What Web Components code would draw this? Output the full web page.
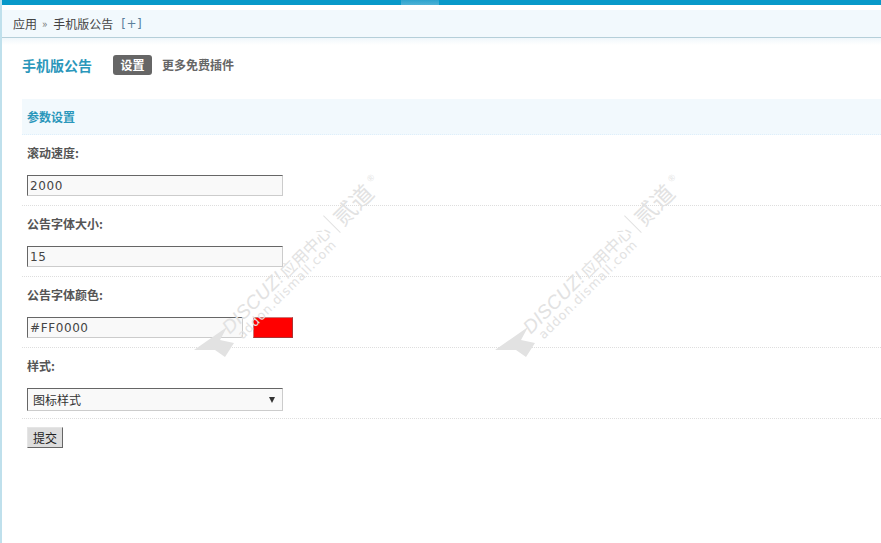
<!DOCTYPE html>
<html lang="zh">
<head>
<meta charset="utf-8">
<title>手机版公告</title>
<style>
html, body { margin: 0; height: 100%; background: #fff; overflow: hidden; }
body { font: 12px "Noto Sans CJK SC", "Liberation Sans", sans-serif; color: #444; }
</style>
</head>
<body>
<admin-shell>
   <crumb-bar slot="crumbs"></crumb-bar>
   <plugin-head></plugin-head>
   <form-panel heading="参数设置">
      <form-row label="滚动速度:"><text-field value="2000"></text-field></form-row>
      <form-row label="公告字体大小:"><text-field value="15"></text-field></form-row>
      <form-row label="公告字体颜色:"><color-field value="#FF0000"></color-field></form-row>
      <form-row label="样式:"><select-field value="图标样式"></select-field></form-row>
      <submit-button>提交</submit-button>
   </form-panel>
   <dz-watermark style="left:190px;top:170px"></dz-watermark>
   <dz-watermark style="left:491px;top:170px"></dz-watermark>
</admin-shell>

<script>
const define = ( selector, html, init ) => {
   customElements.define( selector, class extends HTMLElement {
      constructor() { super();
         const templateEl = document.createElement( 'template' );
         templateEl.innerHTML = html;
         this.attachShadow( {mode: 'open'} ).appendChild( templateEl.content.cloneNode( true ) );
      }
      connectedCallback() { init && init.call( this, this.shadowRoot ) }
   })
}
const cjk = '"Noto Sans CJK SC", "Liberation Sans", sans-serif';

define( 'admin-shell', `<style>
   :host { display: block; position: relative; height: 543px; box-sizing: border-box;
      border-left: 2px solid #bfe0ec; overflow: hidden; }
   .topbar { height: 5px; margin-left: -2px; padding-left: 401px; background: #0899c9; }
   .topbar i { display: block; width: 38px; height: 5px; background: linear-gradient( #2ea3cd, #4fb2d6 ); }
   .gap { height: 5px; }
</style>
<div class="topbar"><i></i></div>
<div class="gap"></div>
<slot name="crumbs"></slot>
<slot></slot>` );

define( 'crumb-bar', `<style>
   :host { display: flex; align-items: center; height: 27px; padding-left: 11px; box-sizing: content-box;
      background: #f2f9fd; border-bottom: 1px solid #b5cfd9; color: #444; font: 12px/27px ${cjk}; }
   .sep { margin: 0 6px 0 5px; color: #777; font-size: 11px; }
   .add { margin-left: 8px; color: #5a7f9c; letter-spacing: .5px; font: 12px "DejaVu Sans", sans-serif; }
   .fade { position: absolute; left: 0; right: 0; top: 38px; height: 7px;
      background: linear-gradient( #f0f7fb, #fff ); }
</style>
<span>应用</span><span class="sep">»</span><span>手机版公告</span><span class="add">[+]</span>
<div class="fade"></div>` );

define( 'plugin-head', `<style>
   :host { display: flex; align-items: center; height: 22px; padding: 16px 0 23px 20px; font: bold 12px/22px ${cjk}; }
   h1 { margin: 0 21px 0 0; font: bold 14px/22px ${cjk}; color: #2b97bb; }
   .on { display: block; width: 39px; height: 20px; margin-right: 10px; border-radius: 3px;
      background: #666; color: #fff; text-align: center; line-height: 20px; }
   .off { color: #666; }
</style>
<h1>手机版公告</h1><span class="on">设置</span><span class="off">更多免费插件</span>` );

define( 'form-panel', `<style>
   :host { display: block; margin-left: 20px; }
   .head { height: 36px; padding-left: 5px; box-sizing: border-box; background: #f2f9fd;
      border-bottom: 1px dotted #deeffb; color: #2b97bb; font: bold 12px/36px ${cjk}; }
</style>
<div class="head"></div>
<slot></slot>`, function( root ) { root.querySelector( '.head' ).textContent = this.getAttribute( 'heading' ) } );

define( 'form-row', `<style>
   :host { display: block; height: 71px; box-sizing: border-box; padding: 0 0 0 5px;
      border-bottom: 1px dotted #dedede; }
   .label { height: 40px; color: #555; font: bold 12px/35px ${cjk}; }
</style>
<div class="label"></div>
<slot></slot>`, function( root ) { root.querySelector( '.label' ).textContent = this.getAttribute( 'label' ) } );

const fieldCss = `
   .box { display: block; box-sizing: border-box; height: 21px; padding: 0 2px; background: #f9f9f9;
      border: 1px solid; border-color: #666 #ccc #ccc #666; color: #444;
      font: 12px/20px "DejaVu Sans", sans-serif; letter-spacing: .6px; }`;

define( 'text-field', `<style>
   :host { display: block; width: 256px; }
   ${fieldCss}
</style>
<span class="box"></span>`, function( root ) { root.querySelector( '.box' ).textContent = this.getAttribute( 'value' ) } );

define( 'color-field', `<style>
   :host { display: flex; align-items: flex-start; width: 266px; }
   ${fieldCss}
   .box { width: 216px; }
   .swatch { width: 40px; height: 21px; margin-left: 10px; box-sizing: border-box;
      background: #f00; border: 1px solid; border-color: #c77 #a33 #a33 #c77; }
</style>
<span class="box"></span><span class="swatch"></span>`, function( root ) { root.querySelector( '.box' ).textContent = this.getAttribute( 'value' ) } );

define( 'select-field', `<style>
   :host { display: flex; box-sizing: border-box; width: 256px; height: 23px; align-items: center;
      justify-content: space-between; padding: 0 7px 0 5px; background: #f9f9f9;
      border: 1px solid; border-color: #666 #ccc #ccc #666; color: #333; font: 12px/21px ${cjk}; }
   svg { display: block; }
</style>
<span class="text"></span>
<svg width="6" height="6" viewBox="0 0 6 6"><path d="M0 0H6L3 6Z" fill="#333"/></svg>`, function( root ) { root.querySelector( '.text' ).textContent = this.getAttribute( 'value' ) } );

define( 'submit-button', `<style>
   :host { display: block; width: 36px; height: 21px; margin: 8px 0 0 5px; box-sizing: border-box;
      background: #ddd; border: 1px solid; border-color: #e5e5e5 #666 #666 #e5e5e5;
      color: #222; text-align: center; font: 12px/19px ${cjk}; }
</style>
<slot></slot>` );

define( 'dz-watermark', `<style>
   :host { position: absolute; display: block; width: 200px; height: 190px; pointer-events: none; color: #e2e2e2; }
   svg { position: absolute; left: 0; top: 156px; }
   .line { position: absolute; white-space: nowrap; transform-origin: 0 0; transform: rotate(-45deg); }
   .brand { display: flex; align-items: center; left: 25px; top: 152px; height: 24px;
      font: italic 19px/24px "Liberation Sans", sans-serif; letter-spacing: .3px; }
   .brand small { font: 16px/24px ${cjk}; letter-spacing: 0; margin-left: 2px; }
   .brand b { display: block; width: 1px; height: 24px; margin: 0 5px 0 6px; background: currentColor; }
   .brand em { font: normal 23px/24px ${cjk}; letter-spacing: 0; }
   .brand sup { font: normal 9px/1 "Liberation Sans", sans-serif; align-self: flex-start; margin: 3px 0 0 5px; }
   .site { left: 43px; top: 162px; font: 12.5px/14px "DejaVu Sans", sans-serif; letter-spacing: .9px; }
</style>
<svg width="46" height="34" viewBox="0 0 46 34"><path d="M2 24 35 1 28 14 42 17 33 31 23 24Z" fill="currentColor"/></svg>
<div class="line brand">DISCUZ!<small>应用中心</small><b></b><em>贰道</em><sup>®</sup></div>
<div class="line site">addon.dismall.com</div>` );
</script>
</body>
</html>
